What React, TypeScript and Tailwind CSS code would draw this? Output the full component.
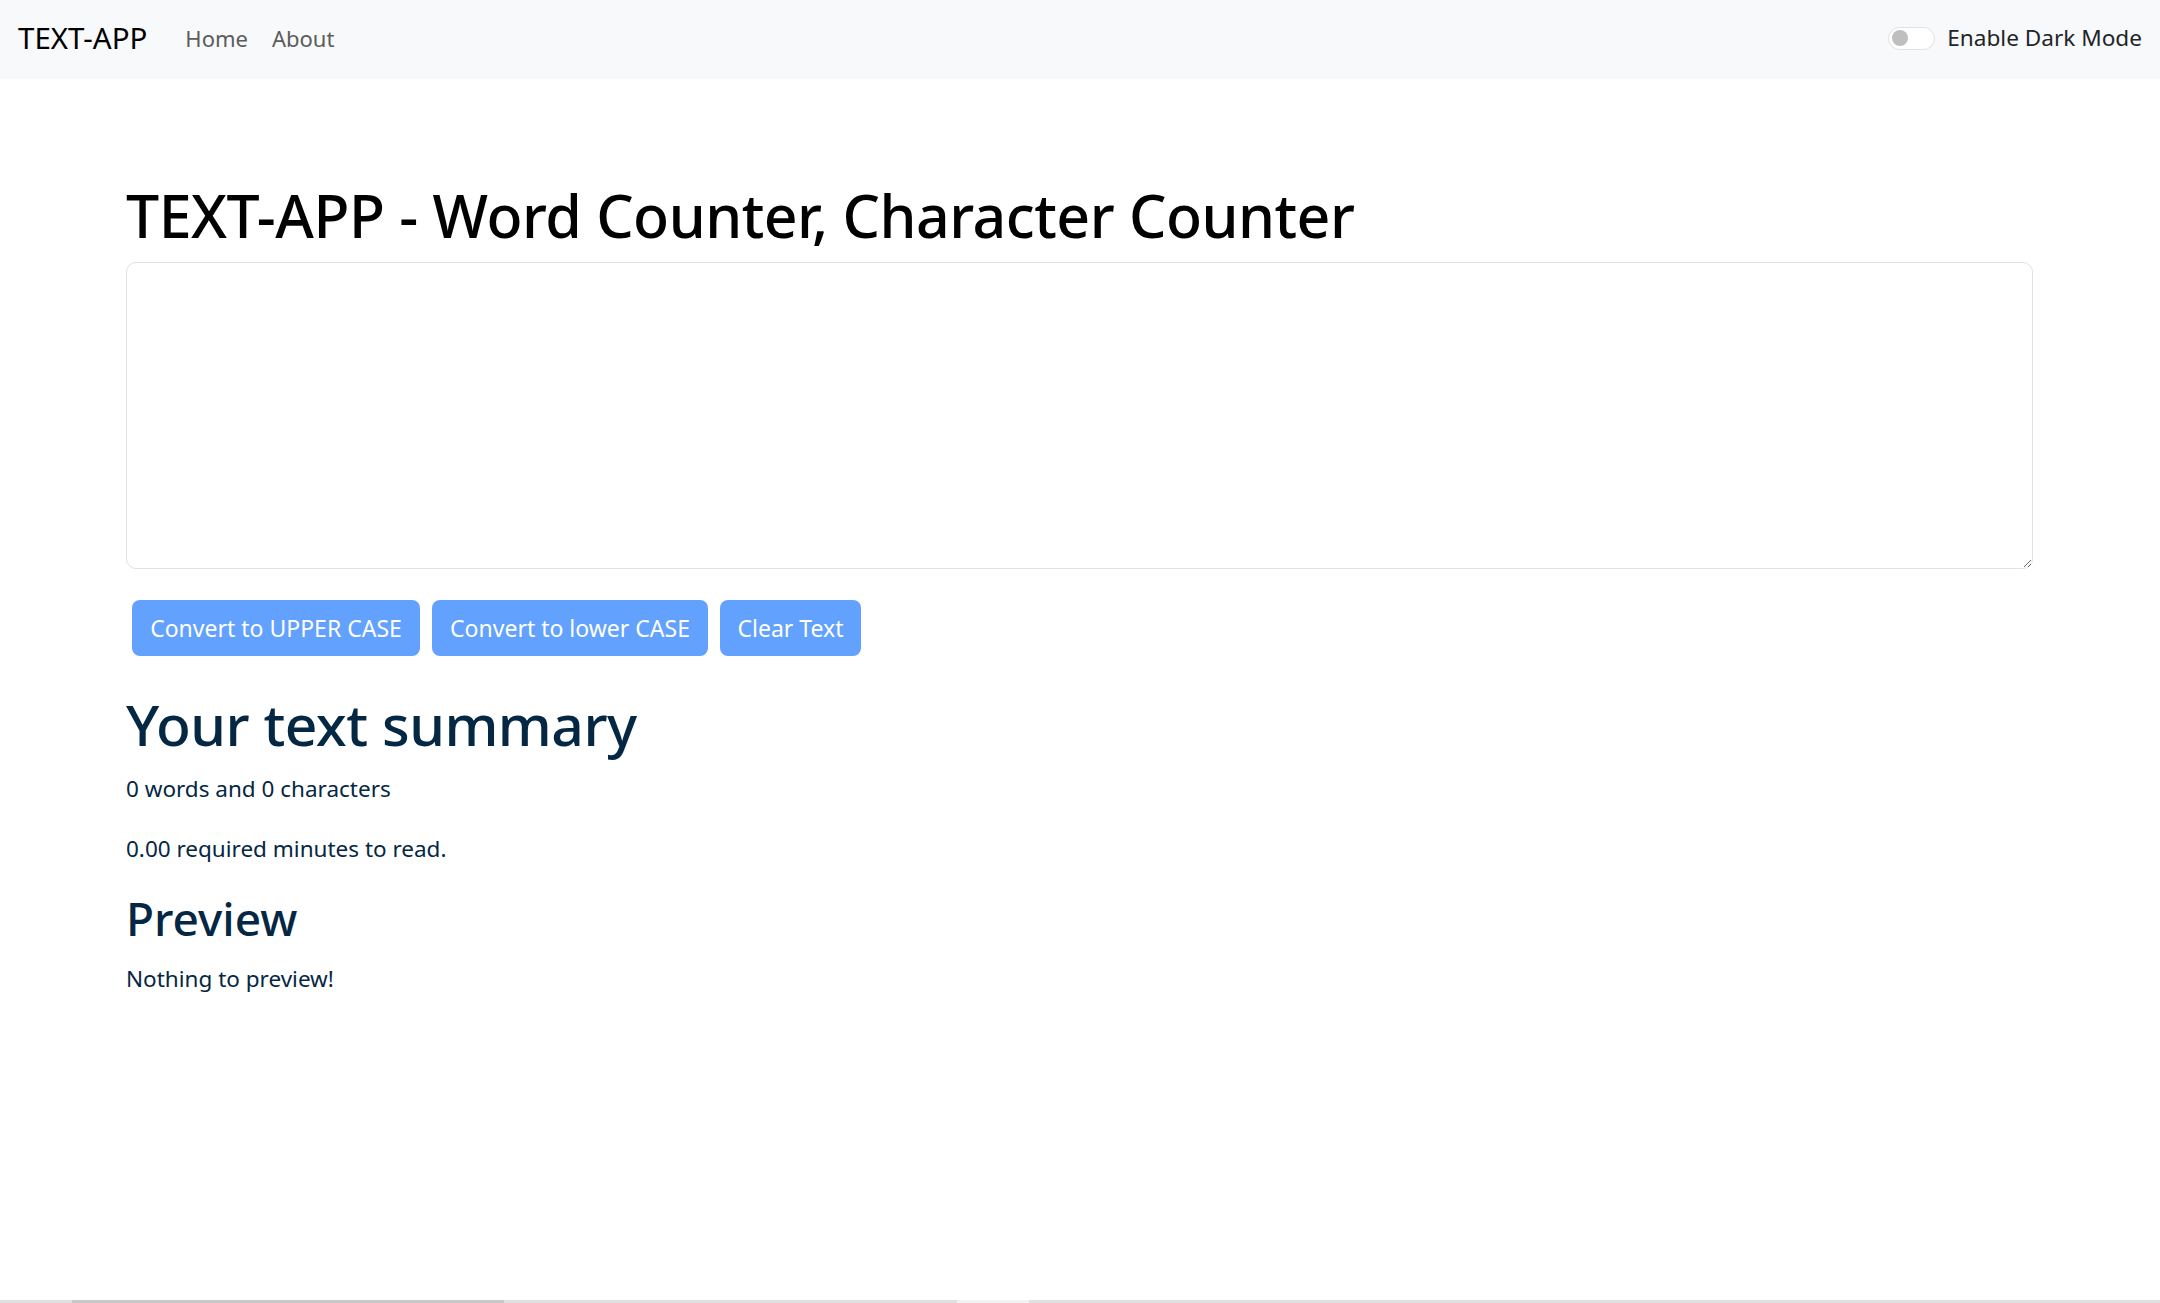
import React, { useState } from "react";

const FONT = "font-['Noto_Sans',sans-serif]";

const Navbar = () => {
  return (
    <nav className="h-[79px] bg-[#f8f9fa] flex items-center justify-between px-[18px] pb-[3px]">
      <div className="flex items-center">
        <a className="text-[29.5px] text-black leading-none">TEXT-APP</a>
        <ul className="flex items-center ml-[38px] gap-[24px] text-[22px] text-[#5c5c5c] leading-none">
          <li>Home</li>
          <li>About</li>
        </ul>
      </div>
      <div className="flex items-center gap-[12px]">
        <div className="w-[47px] h-[23px] rounded-full border border-[#dee2e6] bg-white flex items-center px-[3px]">
          <div className="w-[16px] h-[16px] rounded-full bg-[#bfbfbf]" />
        </div>
        <span className="text-[22.6px] text-[#212529] leading-none">Enable Dark Mode</span>
      </div>
    </nav>
  );
};

const App = () => {
  const [text, setText] = useState("");
  const words = text.split(/\s+/).filter((w) => w.length > 0).length;

  return (
    <div className={`min-h-screen flex flex-col bg-white ${FONT}`}>
      <Navbar />
      <main className="flex-1 pl-[126px] pr-[127px]">
        <h1 className="mt-[100px] text-[59px] leading-[72px] font-medium text-black tracking-[-0.5px]">
          TEXT-APP - Word Counter, Character Counter
        </h1>
        <textarea
          value={text}
          onChange={(e) => setText(e.target.value)}
          className="block mt-[11px] w-full h-[307px] border border-[#dee2e6] rounded-[10px] px-4 py-2 text-[22px] outline-none"
        />
        <div className="flex gap-[12px] mt-[31px] ml-[6px]">
          <button className="w-[288px] h-[56px] rounded-[8px] bg-[#62a1fe] text-white text-[23px]">
            Convert to UPPER CASE
          </button>
          <button className="w-[276px] h-[56px] rounded-[8px] bg-[#62a1fe] text-white text-[23px]">
            Convert to lower CASE
          </button>
          <button className="w-[141px] h-[56px] rounded-[8px] bg-[#62a1fe] text-white text-[23px]">
            Clear Text
          </button>
        </div>
        <div className="text-[#042743]">
          <h2 className="mt-[32px] text-[57px] leading-[72px] font-medium tracking-[-0.5px]">Your text summary</h2>
          <p className="mt-[12px] text-[22.5px] leading-[33px]">
            {words} words and {text.length} characters
          </p>
          <p className="mt-[27px] text-[22.5px] leading-[33px]">
            {(0.008 * words).toFixed(2)} required minutes to read.
          </p>
          <h3 className="mt-[25px] text-[46px] leading-[56px] font-medium">Preview</h3>
          <p className="mt-[16px] text-[22.5px] leading-[33px]">
            {text.length > 0 ? text : "Nothing to preview!"}
          </p>
        </div>
      </main>
      <div className="h-[3px] flex bg-[#e0e0e0]">
        <div className="w-[72px]" />
        <div className="w-[432px] bg-[#c8c8c8]" />
        <div className="w-[453px]" />
        <div className="w-[72px] bg-[#f2f2f2]" />
      </div>
    </div>
  );
};

export default App;
